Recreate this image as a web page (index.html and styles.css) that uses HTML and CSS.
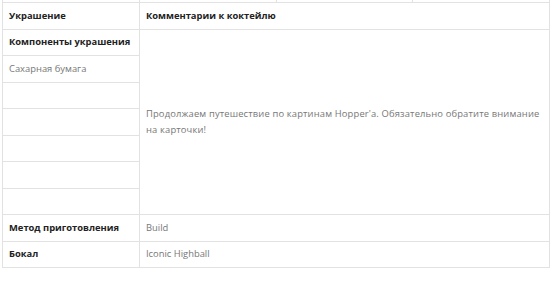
FILE: index.html
```html
<!DOCTYPE html>
<html lang="ru">
<head>
    <meta charset="UTF-8">
    <title>Коктейль</title>
    <link rel="stylesheet" href="styles.css">
</head>
<body>
    <!-- хвост предыдущей таблицы -->
    <div class="prev-row">
        <div class="prev-cell"></div>
        <div class="prev-cell"></div>
        <div class="prev-cell"></div>
        <div class="prev-cell"></div>
    </div>

    <table class="specs">
        <tr>
            <th class="col-name">Украшение</th>
            <th>Комментарии к коктейлю</th>
        </tr>
        <tr>
            <th class="col-name">Компоненты украшения</th>
            <td class="comment" rowspan="7">Продолжаем путешествие по картинам Hopper'a. Обязательно обратите внимание на карточки!</td>
        </tr>
        <tr><td>Сахарная бумага</td></tr>
        <tr><td></td></tr>
        <tr><td></td></tr>
        <tr><td></td></tr>
        <tr><td></td></tr>
        <tr><td></td></tr>
        <tr>
            <th class="col-name">Метод приготовления</th>
            <td>Build</td>
        </tr>
        <tr>
            <th class="col-name">Бокал</th>
            <td>Iconic Highball</td>
        </tr>
    </table>
</body>
</html>
```

FILE: styles.css
```css
/* таблица характеристик коктейля */
body {
    margin: 0;
    padding: 0 0 0 2px;
    background-color: #fff;
    font-family: 'Open Sans', 'Noto Sans', sans-serif;
    font-size: 9.4px;
}
.prev-row {
    display: flex;
    width: 548px;
    height: 2px;
}
.prev-cell {
    flex: 1;
    border-left: 1px solid #e2e2e2;
}
.prev-cell:last-child {
    border-right: 1px solid #e2e2e2;
}
.specs {
    width: 548px;
    border-collapse: collapse;
    table-layout: fixed;
}
.specs th, .specs td {
    border: 1px solid #e2e2e2;
    height: 25.5px;
    padding: 0 6px;
    text-align: left;
    vertical-align: middle;
    line-height: 16px;
}
.specs th {
    font-weight: bold;
    color: #222;
}
.specs td {
    color: #777;
}
.col-name {
    width: 124px;
}
.comment {
    padding-top: 2px;
    letter-spacing: 0.15px;
}
```
